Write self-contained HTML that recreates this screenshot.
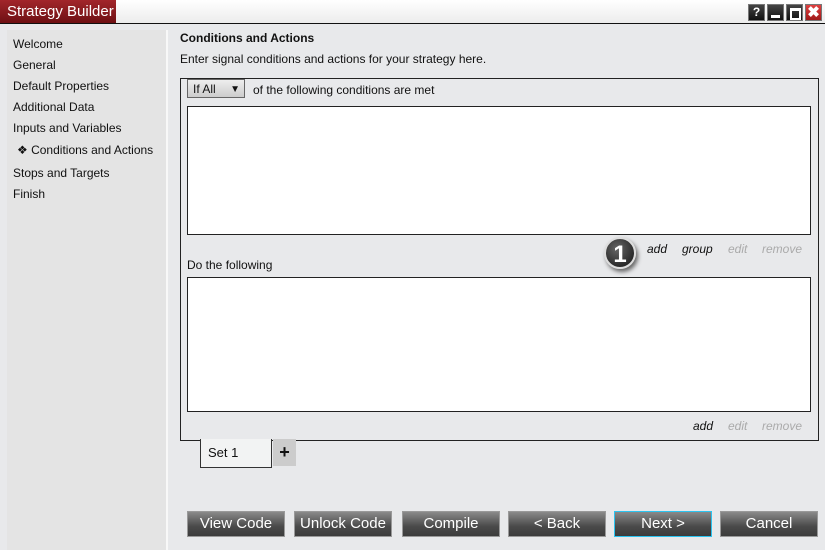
<!DOCTYPE html>
<html><head><style>
body{margin:0;width:825px;height:550px;background:#e8e9eb;font-family:"Liberation Sans",sans-serif;font-size:12px;color:#111;position:relative;overflow:hidden}
.a{position:absolute}
.btn{position:absolute;top:511px;height:24px;width:96px;border:1px solid #999;background:linear-gradient(#8a8a8a,#4a4a4a 60%,#3c3c3c);color:#fff;font-size:15px;text-align:center;line-height:24px}
.wb{position:absolute;top:4px;width:17px;height:17px;background:linear-gradient(#444,#111);border:1px solid #777;box-sizing:border-box}
.nav div{position:absolute;left:6px;font-size:12px}
.lnk{position:absolute;font-style:italic;font-size:12px}
</style></head><body>
<div class="a" style="left:0;top:0;width:825px;height:23px;background:linear-gradient(#fff,#ececec)"></div>
<div class="a" style="left:0;top:0;width:116px;height:23px;background:linear-gradient(#a2262b,#6e1014);color:#fff;font-size:15px;line-height:23px;padding-left:7px;box-sizing:border-box">Strategy Builder</div>
<div class="a" style="left:0;top:23px;width:825px;height:1px;background:#111"></div>
<div class="wb" style="left:748px;color:#fff;font-weight:bold;font-size:12px;text-align:center;line-height:15px">?</div>
<div class="wb" style="left:767px"><div class="a" style="left:3px;top:10px;width:9px;height:3px;background:#fff"></div></div>
<div class="wb" style="left:786px"><div class="a" style="left:3px;top:3px;width:7px;height:7px;border:2px solid #fff;border-top-width:3px"></div></div>
<div class="wb" style="left:805px;background:linear-gradient(#e04040,#a01818);color:#fff;font-weight:bold;font-size:15px;text-align:center;line-height:16px">✖</div>
<div class="a nav" style="left:7px;top:30px;width:159px;height:520px;background:#e4e4e4;border-right:2px solid #f8f8f8">
<div style="top:7px">Welcome</div><div style="top:28px">General</div><div style="top:49px">Default Properties</div><div style="top:70px">Additional Data</div><div style="top:91px">Inputs and Variables</div><div style="top:113px;left:10px">❖ Conditions and Actions</div><div style="top:136px">Stops and Targets</div><div style="top:157px">Finish</div>
</div>
<div class="a" style="left:180px;top:31px;font-weight:bold">Conditions and Actions</div>
<div class="a" style="left:180px;top:52px">Enter signal conditions and actions for your strategy here.</div>
<div class="a" style="left:180px;top:78px;width:637px;height:361px;border:1px solid #222"></div>
<div class="a" style="left:187px;top:79px;width:58px;height:19px;border:1px solid #666;background:linear-gradient(#eee,#ccc);font-size:12px;line-height:19px;padding-left:5px;box-sizing:border-box">If All<span style="position:absolute;right:4px;font-size:10px">▼</span></div>
<div class="a" style="left:253px;top:83px">of the following conditions are met</div>
<div class="a" style="left:187px;top:106px;width:622px;height:127px;border:1px solid #222;background:#fff"></div>
<div class="a" style="left:604px;top:237px;width:32px;height:32px;border-radius:50%;background:radial-gradient(circle at 40% 35%,#666,#111);border:2px solid #ddd;box-shadow:2px 3px 4px #666;color:#fff;font-weight:bold;font-size:24px;text-align:center;line-height:32px;box-sizing:border-box">1</div>
<div class="lnk" style="left:647px;top:242px">add</div>
<div class="lnk" style="left:682px;top:242px">group</div>
<div class="lnk" style="left:728px;top:242px;color:#aaa">edit</div>
<div class="lnk" style="left:762px;top:242px;color:#aaa">remove</div>
<div class="a" style="left:187px;top:258px">Do the following</div>
<div class="a" style="left:187px;top:277px;width:622px;height:133px;border:1px solid #222;background:#fff"></div>
<div class="lnk" style="left:693px;top:419px">add</div>
<div class="lnk" style="left:728px;top:419px;color:#aaa">edit</div>
<div class="lnk" style="left:762px;top:419px;color:#aaa">remove</div>
<div class="a" style="left:200px;top:439px;width:72px;height:29px;border:1px solid #333;border-top:none;background:#f2f3f3;font-size:13px;line-height:28px;padding-left:7px;box-sizing:border-box">Set 1</div>
<div class="a" style="left:273px;top:439px;width:23px;height:27px;background:#ccc;font-size:18px;font-weight:bold;text-align:center;line-height:26px">+</div>
<div class="btn" style="left:187px">View Code</div>
<div class="btn" style="left:294px">Unlock Code</div>
<div class="btn" style="left:402px">Compile</div>
<div class="btn" style="left:508px">&lt; Back</div>
<div class="btn" style="left:614px;border-color:#2bc4f0">Next &gt;</div>
<div class="btn" style="left:720px">Cancel</div>
</body></html>
